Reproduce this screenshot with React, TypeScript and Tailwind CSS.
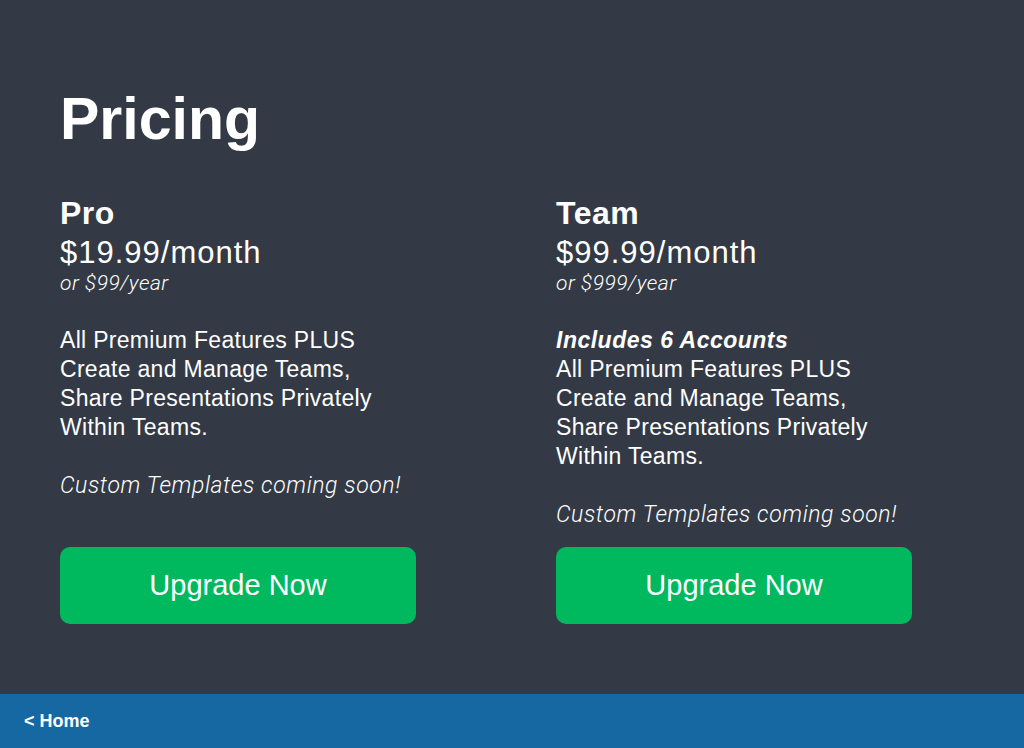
import React from "react";

interface Plan {
  name: string;
  price: string;
  yearly: string;
  highlight?: string;
}

const plans: Plan[] = [
  { name: "Pro", price: "$19.99/month", yearly: "or $99/year" },
  { name: "Team", price: "$99.99/month", yearly: "or $999/year", highlight: "Includes 6 Accounts" },
];

const PlanCard: React.FC<{ plan: Plan }> = ({ plan }) => (
  <div className="flex flex-col">
    <div className="flex-1">
      <h2 className="text-[32px] leading-[39px] font-bold tracking-[0.5px]">{plan.name}</h2>
      <p className="text-[31px] leading-[39px] tracking-[1px]">{plan.price}</p>
      <p className="text-[21px] leading-[22px] italic font-light tracking-[0.5px] font-['Roboto',sans-serif]">
        {plan.yearly}
      </p>
      <div className="mt-[32px] text-[23px] leading-[29px] tracking-[0.3px]">
        {plan.highlight && <p className="font-bold italic tracking-[0.5px]">{plan.highlight}</p>}
        <p>
          All Premium Features PLUS
          <br />
          Create and Manage Teams,
          <br />
          Share Presentations Privately
          <br />
          Within Teams.
        </p>
        <p className="mt-[29px] italic font-light tracking-[0.6px] font-['Roboto',sans-serif]">
          Custom Templates coming soon!
        </p>
      </div>
    </div>
    <button className="mt-[18px] w-[356px] h-[77px] rounded-[10px] bg-[#00b95e] text-[29px] text-white">
      Upgrade Now
    </button>
  </div>
);

export default function App() {
  return (
    <div className="h-[748px] w-[1024px] flex flex-col bg-[#333a45] text-white font-['Liberation_Sans',Arial,sans-serif]">
      <main className="flex-1 px-[60px] pt-[89px]">
        <h1 className="text-[59px] leading-[60px] font-bold">Pricing</h1>
        <div className="mt-[45px] grid grid-cols-2 gap-x-[88px]">
          {plans.map((p) => (
            <PlanCard key={p.name} plan={p} />
          ))}
        </div>
      </main>
      <footer className="h-[54px] bg-[#1668a3] flex items-center px-[24px]">
        <a className="text-[18px] font-bold">&lt; Home</a>
      </footer>
    </div>
  );
}
